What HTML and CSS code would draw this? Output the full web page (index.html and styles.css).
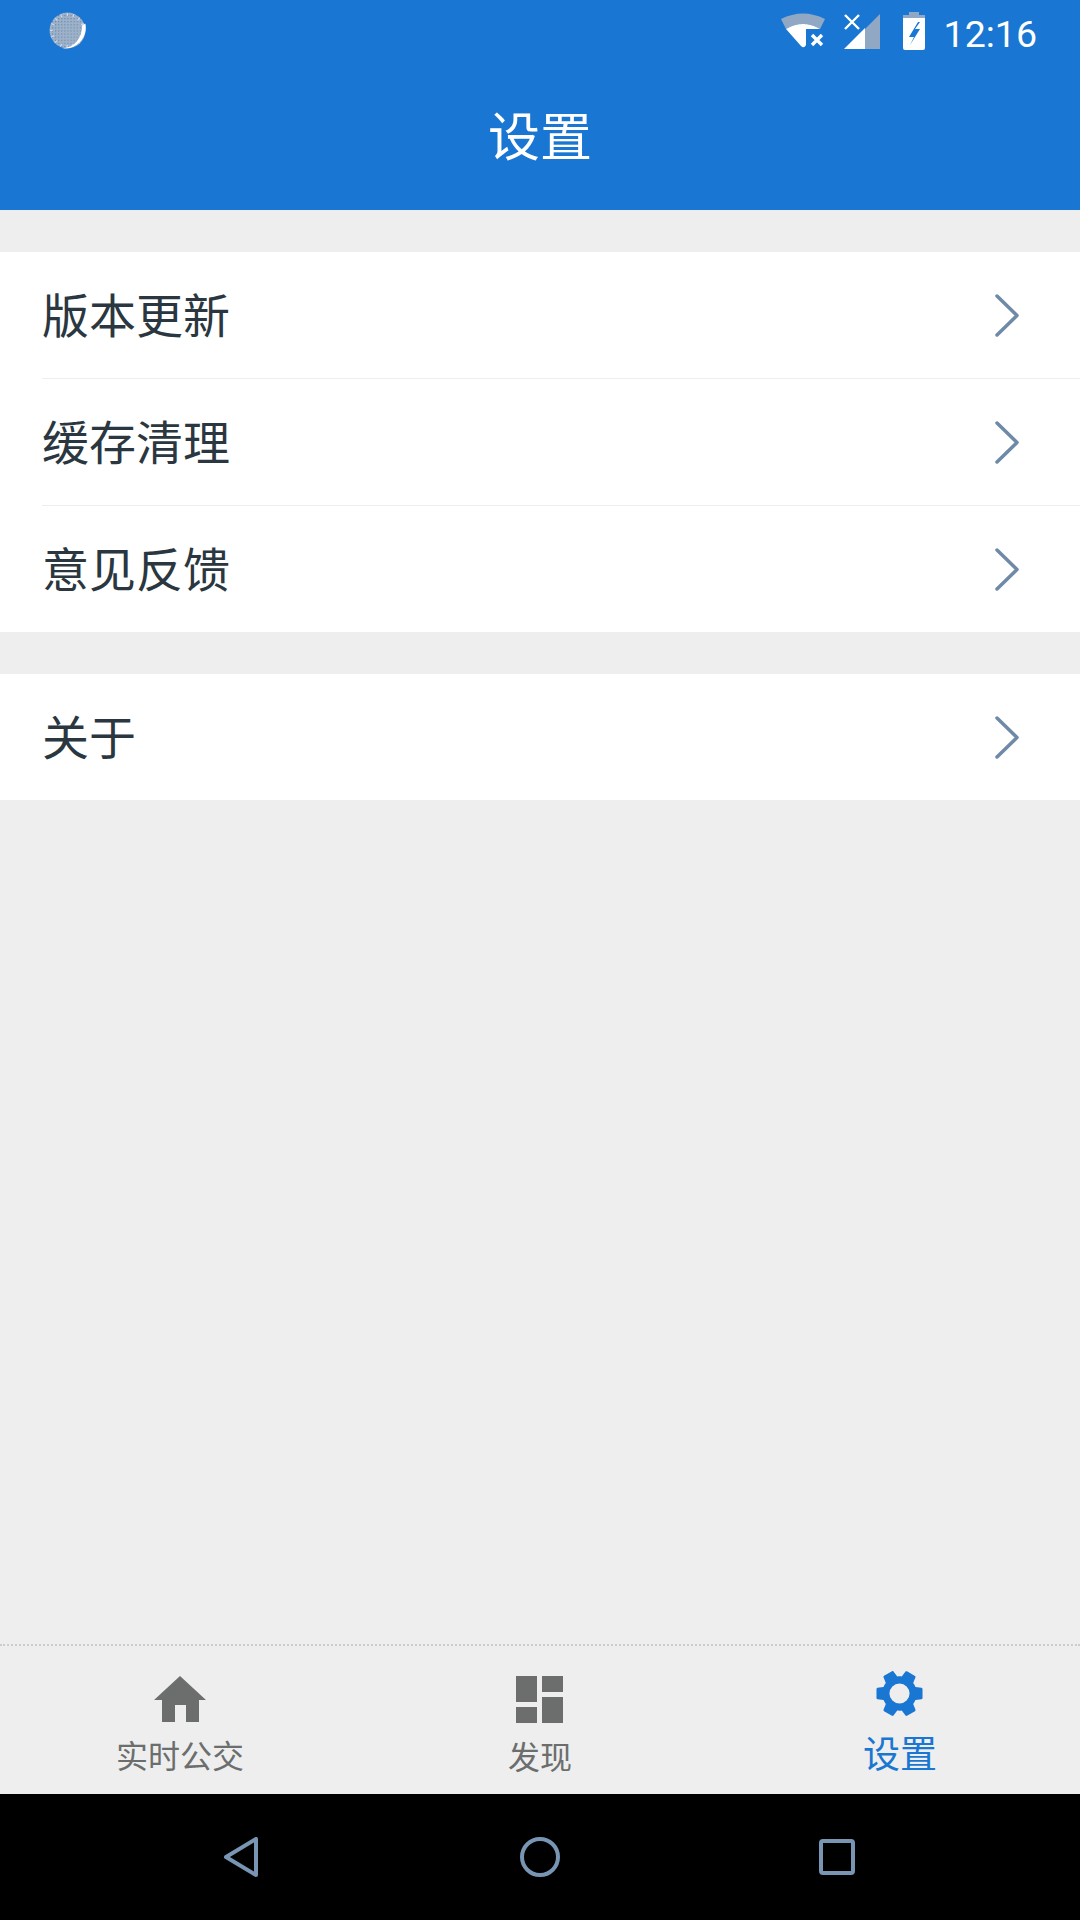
FILE: index.html
```html
<!DOCTYPE html>
<html lang="zh-CN">
	<head>
		<meta charset="UTF-8">
		<meta name="viewport" content="width=device-width, initial-scale=1">
		<title>设置</title>
		<link rel="stylesheet" href="styles.css">
	</head>
	<body>
		<header class="top">
			<div class="status">
				<svg class="moon" width="39" height="39" viewBox="0 0 38 38">
					<defs>
						<pattern id="dots" width="3" height="3" patternUnits="userSpaceOnUse">
							<rect width="3" height="3" fill="#9fb1c6"/>
							<rect width="1" height="1" fill="#4f82bd"/>
						</pattern>
					</defs>
					<circle cx="18" cy="18" r="17.5" fill="url(#dots)"/>
					<circle cx="18" cy="18" r="15.5" fill="none" stroke="#d5deea" stroke-width="3" stroke-dasharray="1 5"/>
					<path d="M35.5 11.5C38 24 28 37 13 35.5 24 35 32 27 32.5 12.5z" fill="#fff"/>
				</svg>
				<div class="status-right">
					<svg class="wifi" width="46" height="38" viewBox="0 0 46 38">
						<path d="M1 6Q23-5 45 6L40 16Q23 6 6 16z" fill="#90a8c4"/>
						<path d="M6 16Q23 6 40 16H26V32Q24 36 21 33z" fill="#fff"/>
						<path d="M32 22l10 10M42 22L32 32" stroke="#fff" stroke-width="3.4" fill="none"/>
					</svg>
					<svg class="signal" width="36" height="36" viewBox="0 0 36 36">
						<path d="M21 15L36 0V35H21z" fill="#90a8c4"/>
						<path d="M0 35L21 14V35z" fill="#fff"/>
						<path d="M1 1l14 14M15 1L1 15" stroke="#fff" stroke-width="2.4" fill="none"/>
					</svg>
					<svg class="battery" width="22" height="38" viewBox="0 0 22 38">
						<path d="M6 0H16V3H22V7H0V3H6z" fill="#90a8c4"/>
						<path d="M0 6H22V36Q22 38 20 38H2Q0 38 0 36zM15 10L6 25H11L7 33L17 17H12L17 10z" fill="#fff" fill-rule="evenodd"/>
					</svg>
					<span class="clock">12:16</span>
				</div>
			</div>
			<h1 class="title">设置</h1>
		</header>

		<main class="content">
			<ul class="group">
				<li class="row"><span>版本更新</span>
					<svg class="arrow" width="26" height="43" viewBox="0 0 26 43"><path d="M3 2L23 21.5 3 41"/></svg>
				</li>
				<li class="row"><span>缓存清理</span>
					<svg class="arrow" width="26" height="43" viewBox="0 0 26 43"><path d="M3 2L23 21.5 3 41"/></svg>
				</li>
				<li class="row"><span>意见反馈</span>
					<svg class="arrow" width="26" height="43" viewBox="0 0 26 43"><path d="M3 2L23 21.5 3 41"/></svg>
				</li>
			</ul>
			<ul class="group">
				<li class="row"><span>关于</span>
					<svg class="arrow" width="26" height="43" viewBox="0 0 26 43"><path d="M3 2L23 21.5 3 41"/></svg>
				</li>
			</ul>
		</main>

		<nav class="tabs">
			<div class="tab">
				<svg class="tab-icon" width="52" height="46" viewBox="0 0 52 46">
					<path d="M26 0L52 24H45V46H32V29H21V46H8V24H0z" fill="currentColor"/>
				</svg>
				<span>实时公交</span>
			</div>
			<div class="tab">
				<svg class="tab-icon icon-nudge" width="47" height="47" viewBox="0 0 47 47">
					<path d="M0 0H21V26H0zM26 0H47V16H26zM26 21H47V47H26zM0 31H21V47H0z" fill="currentColor"/>
				</svg>
				<span>发现</span>
			</div>
			<div class="tab tab-active">
				<svg class="tab-icon icon-nudge" width="47" height="47" viewBox="2.2 2.2 19.6 19.6">
					<path transform="rotate(90 12 12)" fill="currentColor" fill-rule="evenodd" d="M19.14 12.94c.04-.3.06-.61.06-.94 0-.32-.02-.64-.07-.94l2.03-1.58c.18-.14.23-.41.12-.61l-1.92-3.32c-.12-.22-.37-.29-.59-.22l-2.39.96c-.5-.38-1.03-.7-1.62-.94l-.36-2.54c-.04-.24-.24-.41-.48-.41h-3.84c-.24 0-.43.17-.47.41l-.36 2.54c-.59.24-1.13.57-1.62.94l-2.39-.96c-.22-.08-.47 0-.59.22L2.74 8.87c-.12.21-.08.47.12.61l2.03 1.58c-.05.3-.09.63-.09.94s.02.64.07.94l-2.03 1.58c-.18.14-.23.41-.12.61l1.92 3.32c.12.22.37.29.59.22l2.39-.96c.5.38 1.03.7 1.62.94l.36 2.54c.05.24.24.41.48.41h3.84c.24 0 .44-.17.47-.41l.36-2.54c.59-.24 1.13-.56 1.62-.94l2.39.96c.22.08.47 0 .59-.22l1.92-3.32c.12-.22.07-.47-.12-.61l-2.01-1.58zM12 16.2a4.2 4.2 0 1 1 0-8.4 4.2 4.2 0 0 1 0 8.4z"/>
				</svg>
				<span>设置</span>
			</div>
		</nav>

		<footer class="softkeys">
			<svg width="34" height="40" viewBox="0 0 34 40"><path d="M32 2V38L2 20z"/></svg>
			<svg width="40" height="40" viewBox="0 0 40 40"><circle cx="20" cy="20" r="18"/></svg>
			<svg class="key-recent" width="36" height="36" viewBox="0 0 36 36"><rect x="2" y="2" width="32" height="32" rx="2"/></svg>
		</footer>
	</body>
</html>
```

FILE: styles.css
```css
* {
	box-sizing: border-box;
}
body {
	margin: 0;
	width: 1080px;
	height: 1920px;
	display: flex;
	flex-direction: column;
	background: #eee;
	font-family: "Noto Sans CJK SC", "Noto Sans", sans-serif;
}

/* top bar */
.top {
	height: 210px;
	background: #1976d2;
	color: #fff;
}
.status {
	height: 60px;
	display: flex;
	justify-content: space-between;
	padding: 12px 43px 0 49px;
}
.status-right {
	display: flex;
	align-items: flex-start;
}
.wifi {
	margin: 1px 18px 0 0;
}
.signal {
	margin: 2px 23px 0 0;
}
.battery {
	margin-right: 19px;
}
.clock {
	margin-top: 3px;
	font-family: Roboto, sans-serif;
	font-size: 37.5px;
	line-height: 38px;
}
.title {
	margin: 0;
	height: 150px;
	padding-bottom: 4px;
	display: flex;
	align-items: center;
	justify-content: center;
	font-size: 52px;
	font-weight: normal;
}

/* settings list */
.content {
	flex: 1;
	padding-top: 42px;
}
.group {
	list-style: none;
	margin: 0 0 42px;
	padding: 0 0 0 42px;
	background: #fff;
}
.row {
	height: 127px;
	display: flex;
	align-items: center;
	justify-content: space-between;
	padding-right: 60px;
	border-bottom: 1.5px solid #eee;
	font-size: 47px;
	color: #2b3740;
}
.row span {
	padding-bottom: 5px;
}
.row:last-child {
	height: 126px;
	border-bottom: 0;
}
.arrow path {
	fill: none;
	stroke: #6f8aa6;
	stroke-width: 3.5;
	stroke-linecap: round;
	stroke-linejoin: round;
}

/* bottom tabs */
.tabs {
	height: 150px;
	display: grid;
	grid-template-columns: repeat(3, 1fr);
	border-top: 2px dotted #ccc;
}
.tab {
	display: flex;
	flex-direction: column;
	align-items: center;
	padding-top: 30px;
	font-size: 32px;
	line-height: 40px;
	color: #6c6e6e;
}
.tab-icon {
	margin-bottom: 12px;
}
.icon-nudge {
	margin-right: 2px;
}
.tab-active {
	padding-top: 24px;
	font-size: 37px;
	color: #1976d2;
}
.tab-active .tab-icon {
	margin-bottom: 15px;
}

/* android keys */
.softkeys {
	height: 126px;
	background: #000;
	display: flex;
	align-items: center;
	padding-left: 224px;
	gap: 262px;
}
.softkeys .key-recent {
	margin-left: -3px;
}
.softkeys svg * {
	fill: none;
	stroke: #7895b3;
	stroke-width: 4;
	stroke-linejoin: round;
}
```
